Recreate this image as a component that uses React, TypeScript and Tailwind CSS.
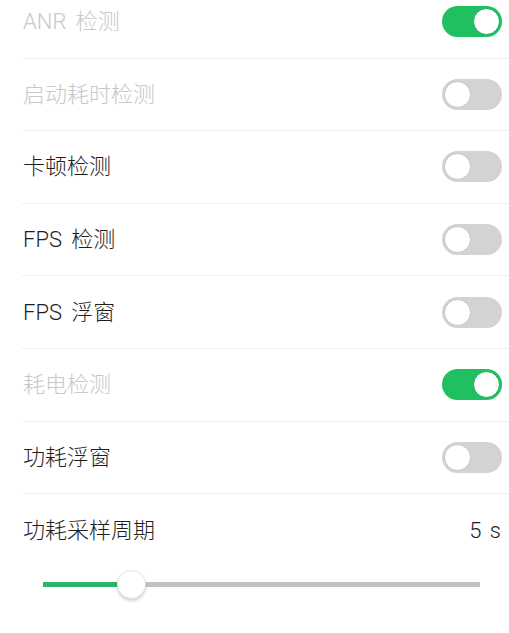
import { useState } from 'react';

type Item = { label: string; on: boolean; disabled?: boolean };

const items: Item[] = [
  { label: 'ANR 检测', on: true, disabled: true },
  { label: '启动耗时检测', on: false, disabled: true },
  { label: '卡顿检测', on: false },
  { label: 'FPS 检测', on: false },
  { label: 'FPS 浮窗', on: false },
  { label: '耗电检测', on: true, disabled: true },
  { label: '功耗浮窗', on: false },
];

function Toggle({ on, onClick }: { on: boolean; onClick: () => void }) {
  return (
    <button
      onClick={onClick}
      className={
        'flex h-[31px] w-[60px] items-center rounded-full p-[2px] ' +
        (on ? 'justify-end bg-[#20bf60]' : 'justify-start bg-[#d3d3d3]')
      }
    >
      <span
        className={
          'h-[27px] w-[27px] rounded-full bg-white border ' +
          (on ? 'border-[#1ea957]' : 'border-[#c4c4c4]')
        }
      />
    </button>
  );
}

export default function App() {
  const [state, setState] = useState(items.map((i) => i.on));
  const period = 5;

  return (
    <div
      className="h-[633px] w-full overflow-hidden bg-white"
      style={{ fontFamily: 'Roboto, "Noto Sans CJK SC", sans-serif' }}
    >
      <div className="-mt-[14px]">
        {items.map((item, i) => (
          <div
            key={item.label}
            className="ml-[22px] flex h-[72.6px] items-center justify-between border-b border-[#efefef] pl-px pr-[7px]"
          >
            <span
              className={
                'text-[22px] font-light [word-spacing:4px] ' +
                (item.disabled ? 'text-[#c8c8c8]' : 'text-[#1e1e1e]')
              }
            >
              {item.label}
            </span>
            <Toggle
              on={state[i]}
              onClick={() => setState(state.map((v, j) => (j === i ? !v : v)))}
            />
          </div>
        ))}

        {/* sampling period */}
        <div className="ml-[22px] flex h-[72px] items-center justify-between pl-px pr-[8px]">
          <span className="text-[22px] font-light text-[#1e1e1e]">功耗采样周期</span>
          <span className="text-[22px] font-light text-[#1e1e1e] [word-spacing:3px]">{period} s</span>
        </div>
        <div className="flex h-[36px] items-center pl-[43px] pr-[29px]">
          <div className="relative flex h-[5px] w-full items-center bg-[#c2c2c2]">
            <div className="h-full w-[74px] bg-[#2db36c]" />
            <div className="absolute left-[74px] h-[29px] w-[29px] rounded-full border border-[#e4e4e4] bg-white shadow-[0_2px_3px_rgba(0,0,0,0.18)]" />
          </div>
        </div>
      </div>
    </div>
  );
}
